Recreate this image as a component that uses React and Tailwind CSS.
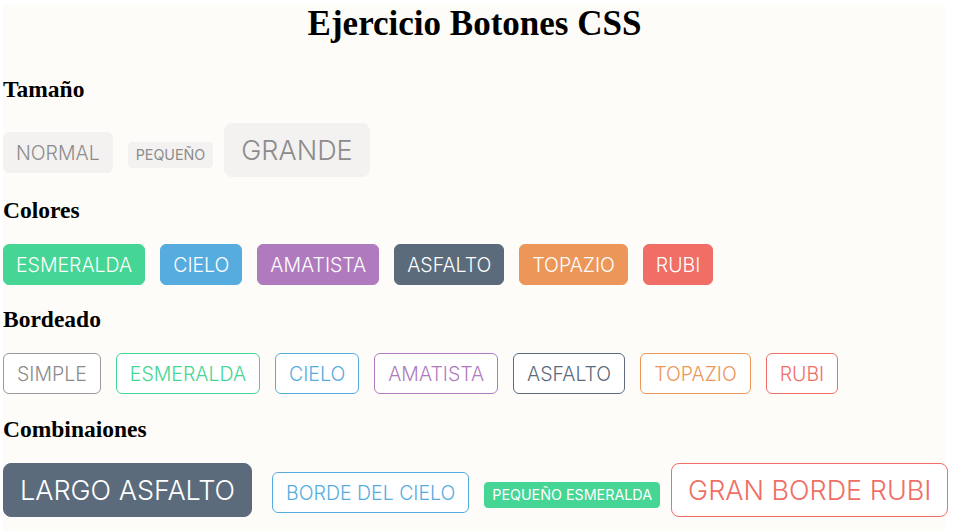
const font = { fontFamily: "Inter, Roboto, sans-serif" };

const sizes = {
  small: "text-[14.3px] font-normal leading-[16px] pt-[4px] pb-[4px] px-[7px] rounded-[4px] mr-[11px]",
  normal: "text-[19.5px] font-light leading-[21px] pt-[10px] pb-[8px] px-[12px] rounded-[6px] mr-[15px]",
  large: "text-[27px] font-light leading-[30px] pt-[12px] pb-[10px] px-[16px] rounded-[8px] mr-[20px]",
};

const fills = {
  plain: "bg-[#f3f2f1] border-[#f3f2f1] text-[#8c8c8c]",
  esmeralda: "bg-[#45d594] border-[#45d594] text-white",
  cielo: "bg-[#56acdf] border-[#56acdf] text-white",
  amatista: "bg-[#b07bbe] border-[#b07bbe] text-white",
  asfalto: "bg-[#5b6b7b] border-[#5b6b7b] text-white",
  topazio: "bg-[#ec9659] border-[#ec9659] text-white",
  rubi: "bg-[#f06e66] border-[#f06e66] text-white",
};

// the outlined ones come out a pixel or two wider in the original
const outlines = {
  simple: "bg-white border-[#9a9a9a] text-[#8c8c8c] !px-[13px]",
  esmeralda: "bg-white border-[#45d594] text-[#45d594] !px-[13px]",
  cielo: "bg-white border-[#56acdf] text-[#56acdf] !px-[13px]",
  amatista: "bg-white border-[#b07bbe] text-[#b07bbe] !px-[13px]",
  asfalto: "bg-white border-[#5b6b7b] text-[#5b6b7b] !px-[13px]",
  topazio: "bg-white border-[#ec9659] text-[#ec9659] !px-[13px]",
  rubi: "bg-white border-[#f06e66] text-[#f06e66] !px-[13px]",
  rubiGrande: "bg-white border-[#f06e66] text-[#f06e66]",
};

function Boton({ size = "normal", look, children }) {
  return (
    <button
      style={font}
      className={`border whitespace-nowrap ${sizes[size]} ${look}`}
    >
      {children}
    </button>
  );
}

function Titulo({ children, className }) {
  return (
    <h3
      className={`text-[23.5px] leading-[24px] font-bold text-black ${className}`}
      style={{ fontFamily: "'Liberation Serif', serif" }}
    >
      {children}
    </h3>
  );
}

export default function App() {
  return (
    <div className="bg-white min-h-[531px] pt-[5px] pl-[3px]">
      <div className="w-[943px] bg-[#fdfcf9] flex flex-col pb-[20px]">
        <h1
          className="mt-[1px] text-[35px] leading-[36px] font-bold text-center text-black"
          style={{ fontFamily: "'Liberation Serif', serif" }}
        >
          Ejercicio Botones CSS
        </h1>

        <Titulo className="mt-[35px]">Tamaño</Titulo>
        <div className="flex items-baseline mt-[22px]">
          <Boton look={fills.plain}>NORMAL</Boton>
          <Boton size="small" look={fills.plain}>PEQUEÑO</Boton>
          <Boton size="large" look={fills.plain}>GRANDE</Boton>
        </div>

        <Titulo className="mt-[21px]">Colores</Titulo>
        <div className="flex items-baseline mt-[22px]">
          <Boton look={fills.esmeralda}>ESMERALDA</Boton>
          <Boton look={fills.cielo}>CIELO</Boton>
          <Boton look={fills.amatista}>AMATISTA</Boton>
          <Boton look={fills.asfalto}>ASFALTO</Boton>
          <Boton look={fills.topazio}>TOPAZIO</Boton>
          <Boton look={fills.rubi}>RUBI</Boton>
        </div>

        <Titulo className="mt-[22px]">Bordeado</Titulo>
        <div className="flex items-baseline mt-[22px]">
          <Boton look={outlines.simple}>SIMPLE</Boton>
          <Boton look={outlines.esmeralda}>ESMERALDA</Boton>
          <Boton look={outlines.cielo}>CIELO</Boton>
          <Boton look={outlines.amatista}>AMATISTA</Boton>
          <Boton look={outlines.asfalto}>ASFALTO</Boton>
          <Boton look={outlines.topazio}>TOPAZIO</Boton>
          <Boton look={outlines.rubi}>RUBI</Boton>
        </div>

        <Titulo className="mt-[23px]">Combinaiones</Titulo>
        <div className="flex items-baseline mt-[22px]">
          <Boton size="large" look={fills.asfalto}>LARGO ASFALTO</Boton>
          <Boton look={outlines.cielo}>BORDE DEL CIELO</Boton>
          <Boton size="small" look={fills.esmeralda}>PEQUEÑO ESMERALDA</Boton>
          <Boton size="large" look={outlines.rubiGrande}>GRAN BORDE RUBI</Boton>
        </div>
      </div>
    </div>
  );
}
